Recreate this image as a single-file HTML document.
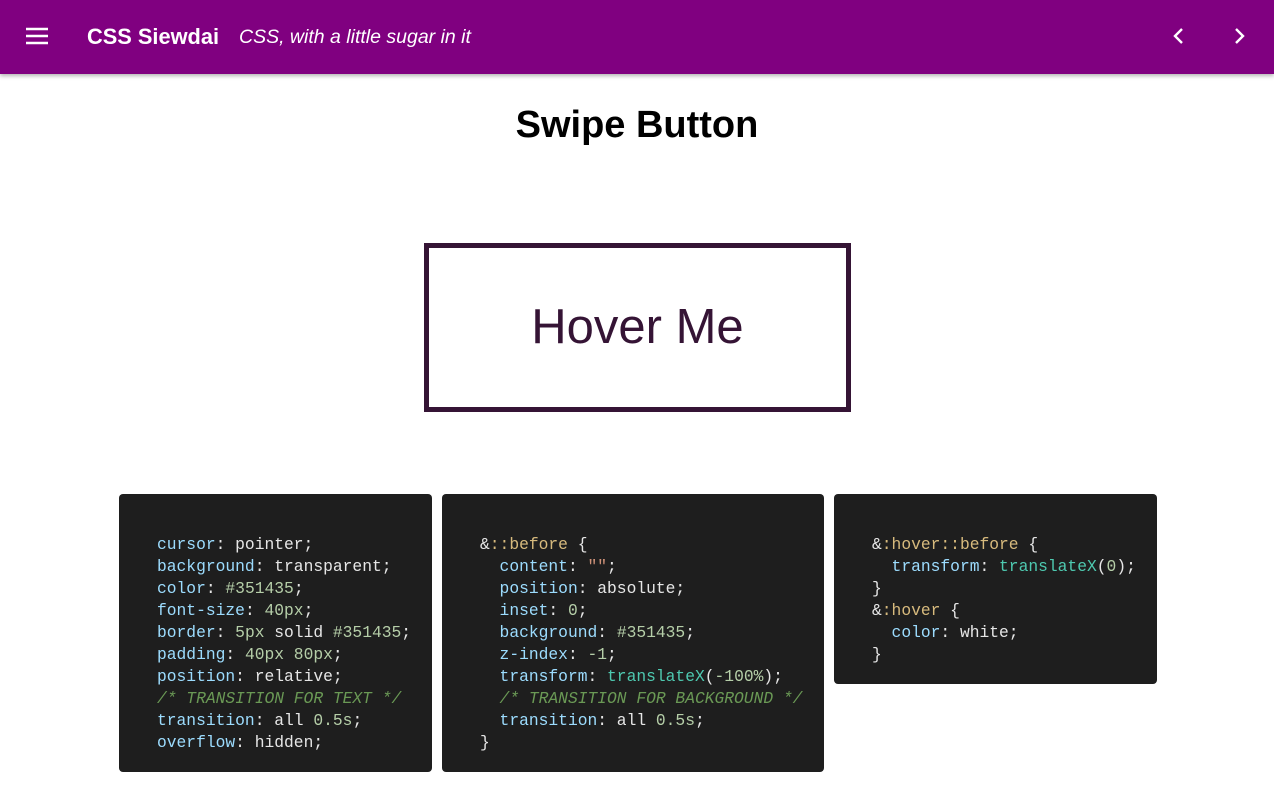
<!DOCTYPE html>
<html><head><style>
body{margin:0;width:1274px;height:808px;background:#fff;font-family:"Liberation Sans",sans-serif;overflow:hidden;position:relative}
.hdr{position:absolute;left:0;top:0;width:1274px;height:74px;background:#800080;box-shadow:0 2px 4px rgba(0,0,0,.3);color:#fff}
.t1{position:absolute;left:87px;top:24px;font-weight:bold;font-size:21.8px}
.t2{position:absolute;left:239px;top:26px;font-style:italic;font-size:19.5px}
h1{position:absolute;left:0;width:1274px;text-align:center;top:104px;margin:0;font-size:38px;font-weight:bold}
.btn{position:absolute;left:424px;top:243px;width:417px;height:159px;border:5px solid #351435;color:#351435;font-size:49px;text-align:center;line-height:159px}
.code{position:absolute;top:494px;background:#1e1e1e;border-radius:4px;font-family:"Liberation Mono",monospace;font-size:16.3px;line-height:22px;color:#e6e6e6;white-space:pre;box-sizing:border-box;padding-top:40px}
.p{color:#9cdcfe}.n{color:#b5cea8}.c{color:#6a9955;font-style:italic}.s{color:#d7ba7d}.q{color:#ce9178}.f{color:#4ec9b0}
</style></head><body>
<div class="hdr">
<svg style="position:absolute;left:26px;top:27px" width="22" height="18"><path d="M0 2h22M0 9h22M0 16h22" stroke="#fff" stroke-width="2.4"/></svg>
<div class="t1">CSS Siewdai</div><div class="t2">CSS, with a little sugar in it</div>
<svg style="position:absolute;left:1172px;top:28px" width="14" height="16"><path d="M10 1L3 8l7 7" stroke="#fff" stroke-width="2.4" fill="none"/></svg>
<svg style="position:absolute;left:1232px;top:28px" width="14" height="16"><path d="M4 1l7 7-7 7" stroke="#fff" stroke-width="2.4" fill="none"/></svg>
</div>
<h1>Swipe Button</h1>
<div class="btn">Hover Me</div>
<div class="code" style="left:119px;width:313px;height:278px;padding-left:38px"><span class="p">cursor</span>: pointer;
<span class="p">background</span>: transparent;
<span class="p">color</span>: <span class="n">#351435</span>;
<span class="p">font-size</span>: <span class="n">40px</span>;
<span class="p">border</span>: <span class="n">5px</span> solid <span class="n">#351435</span>;
<span class="p">padding</span>: <span class="n">40px 80px</span>;
<span class="p">position</span>: relative;
<span class="c">/* TRANSITION FOR TEXT */</span>
<span class="p">transition</span>: all <span class="n">0.5s</span>;
<span class="p">overflow</span>: hidden;</div>
<div class="code" style="left:442px;width:382px;height:278px;padding-left:38px">&amp;<span class="s">::before</span> {
  <span class="p">content</span>: <span class="q">""</span>;
  <span class="p">position</span>: absolute;
  <span class="p">inset</span>: <span class="n">0</span>;
  <span class="p">background</span>: <span class="n">#351435</span>;
  <span class="p">z-index</span>: <span class="n">-1</span>;
  <span class="p">transform</span>: <span class="f">translateX</span>(<span class="n">-100%</span>);
  <span class="c">/* TRANSITION FOR BACKGROUND */</span>
  <span class="p">transition</span>: all <span class="n">0.5s</span>;
}</div>
<div class="code" style="left:834px;width:323px;height:190px;padding-left:38px">&amp;<span class="s">:hover::before</span> {
  <span class="p">transform</span>: <span class="f">translateX</span>(<span class="n">0</span>);
}
&amp;<span class="s">:hover</span> {
  <span class="p">color</span>: white;
}</div>
</body></html>
